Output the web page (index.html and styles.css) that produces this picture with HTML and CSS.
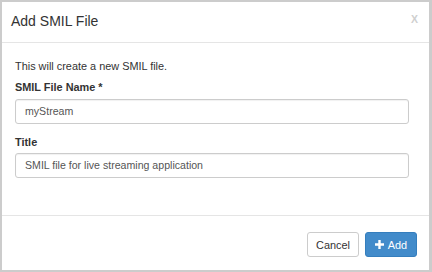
FILE: index.html
```html
<!DOCTYPE html>
<html>
<head>
<meta charset="utf-8">
<link rel="stylesheet" href="styles.css">
</head>
<body>
<div class="dialog">
  <div class="header">
    <h4 class="title">Add SMIL File</h4>
    <span class="close">X</span>
  </div>
  <div class="body">
    <p class="intro">This will create a new SMIL file.</p>
    <div class="group">
      <label class="label">SMIL File Name *</label>
      <div class="input">myStream</div>
    </div>
    <div class="group">
      <label class="label label-title">Title</label>
      <div class="input">SMIL file for live streaming application</div>
    </div>
  </div>
  <div class="footer">
    <button class="btn btn-default">Cancel</button>
    <button class="btn btn-primary"><svg class="plus" width="9" height="9" viewBox="0 0 9 9"><path d="M3.3 0h2.4v3.3H9v2.4H5.7V9H3.3V5.7H0V3.3h3.3z" fill="#fff"/></svg>Add</button>
  </div>
</div>
</body>
</html>
```
FILE: styles.css
```css
* { box-sizing: border-box; }
html, body { margin: 0; padding: 0; }
body {
  width: 432px;
  height: 272px;
  background: #fff;
  font-family: "Liberation Sans", Arial, sans-serif;
  color: #333;
}
.dialog {
  width: 432px;
  height: 272px;
  border: 2px solid #cccccc;
  border-right-width: 3px;
  background: #fff;
  display: flex;
  flex-direction: column;
}
.header {
  height: 41px;
  border-bottom: 1px solid #e5e5e5;
  padding: 9px 11px 0 9px;
  display: flex;
  justify-content: space-between;
  align-items: flex-start;
}
.title {
  margin: 0;
  font-size: 14px;
  font-weight: normal;
  line-height: 20px;
  color: #333;
}
.close {
  font-size: 10.5px;
  font-weight: bold;
  line-height: 12px;
  margin-top: 2px;
  color: #cfcfcf;
}
.body {
  flex: 1;
  padding: 15px 0 0 13px;
  font-size: 10.9px;
  line-height: 16px;
}
.intro {
  margin: 0 0 5px;
}
.group {
  margin-bottom: 10px;
}
.label {
  display: block;
  font-weight: bold;
  margin-bottom: 4px;
}
.label-title {
  margin-bottom: 3px;
}
.input {
  width: 394px;
  height: 25px;
  border: 1px solid #cccccc;
  border-radius: 3px;
  padding: 0 9px;
  font-size: 10.6px;
  line-height: 23px;
  color: #555;
  box-shadow: inset 0 1px 1px rgba(0,0,0,0.06);
}
.footer {
  height: 55px;
  border-top: 1px solid #e5e5e5;
  padding: 16px 12px 0 0;
  display: flex;
  justify-content: flex-end;
  align-items: flex-start;
  gap: 6px;
}
.btn {
  height: 25px;
  width: 52px;
  border-radius: 3px;
  font-family: "Liberation Sans", Arial, sans-serif;
  font-size: 10.9px;
  padding: 0;
  display: flex;
  align-items: center;
  justify-content: center;
}
.btn-default {
  background: #fff;
  border: 1px solid #cccccc;
  color: #333;
}
.btn-primary {
  background: #428bca;
  border: 1px solid #357ebd;
  color: #fff;
}
.plus {
  margin-right: 4px;
  margin-top: -1px;
}
```
